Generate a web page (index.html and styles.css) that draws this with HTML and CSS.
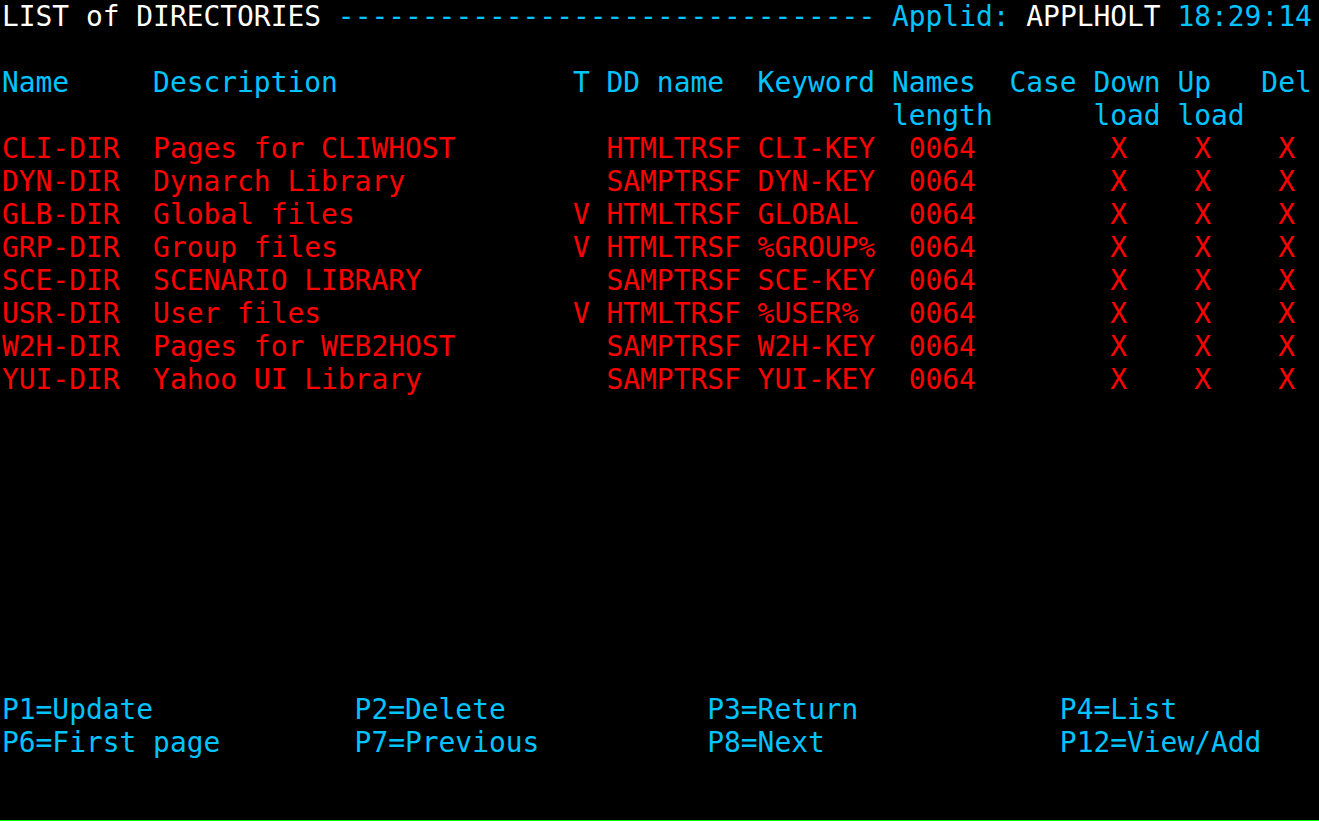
FILE: index.html
```html
<!DOCTYPE html>
<html>
<head>
<meta charset="utf-8">
<title>LIST of DIRECTORIES</title>
<link rel="stylesheet" href="styles.css">
</head>
<body>
<main class="screen">
<div class="row"><span class="w">LIST of DIRECTORIES</span> <span class="c">-------------------------------- Applid:</span> <span class="w">APPLHOLT</span> <span class="c">18:29:14</span></div>
<div class="row"> </div>
<div class="row c">Name     Description              T DD name  Keyword Names  Case Down Up   Del</div>
<div class="row c">                                                     length      load load</div>
<div class="row r">CLI-DIR  Pages for CLIWHOST         HTMLTRSF CLI-KEY  0064        X    X    X</div>
<div class="row r">DYN-DIR  Dynarch Library            SAMPTRSF DYN-KEY  0064        X    X    X</div>
<div class="row r">GLB-DIR  Global files             V HTMLTRSF GLOBAL   0064        X    X    X</div>
<div class="row r">GRP-DIR  Group files              V HTMLTRSF %GROUP%  0064        X    X    X</div>
<div class="row r">SCE-DIR  SCENARIO LIBRARY           SAMPTRSF SCE-KEY  0064        X    X    X</div>
<div class="row r">USR-DIR  User files               V HTMLTRSF %USER%   0064        X    X    X</div>
<div class="row r">W2H-DIR  Pages for WEB2HOST         SAMPTRSF W2H-KEY  0064        X    X    X</div>
<div class="row r">YUI-DIR  Yahoo UI Library           SAMPTRSF YUI-KEY  0064        X    X    X</div>
<div class="row"> </div>
<div class="row"> </div>
<div class="row"> </div>
<div class="row"> </div>
<div class="row"> </div>
<div class="row"> </div>
<div class="row"> </div>
<div class="row"> </div>
<div class="row"> </div>
<div class="row c">P1=Update            P2=Delete            P3=Return            P4=List</div>
<div class="row c">P6=First page        P7=Previous          P8=Next              P12=View/Add</div>
<div class="row"> </div>
</main>
<div class="status"></div>
</body>
</html>
```

FILE: styles.css
```css
html, body {
  margin: 0;
  padding: 0;
  background: #000;
  width: 1319px;
  height: 821px;
  overflow: hidden;
}
body {
  display: flex;
  flex-direction: column;
}
.screen {
  flex: 1;
  font-family: "DejaVu Sans Mono", monospace;
  font-size: 27.9px;
  line-height: 33px;
  padding-left: 2px;
}
.row {
  white-space: pre;
  height: 33px;
}
.w { color: #ffffff; }
.c { color: #00c4ff; }
.r { color: #ff0000; }
.status {
  height: 1px;
  background: #00ff00;
}
```
